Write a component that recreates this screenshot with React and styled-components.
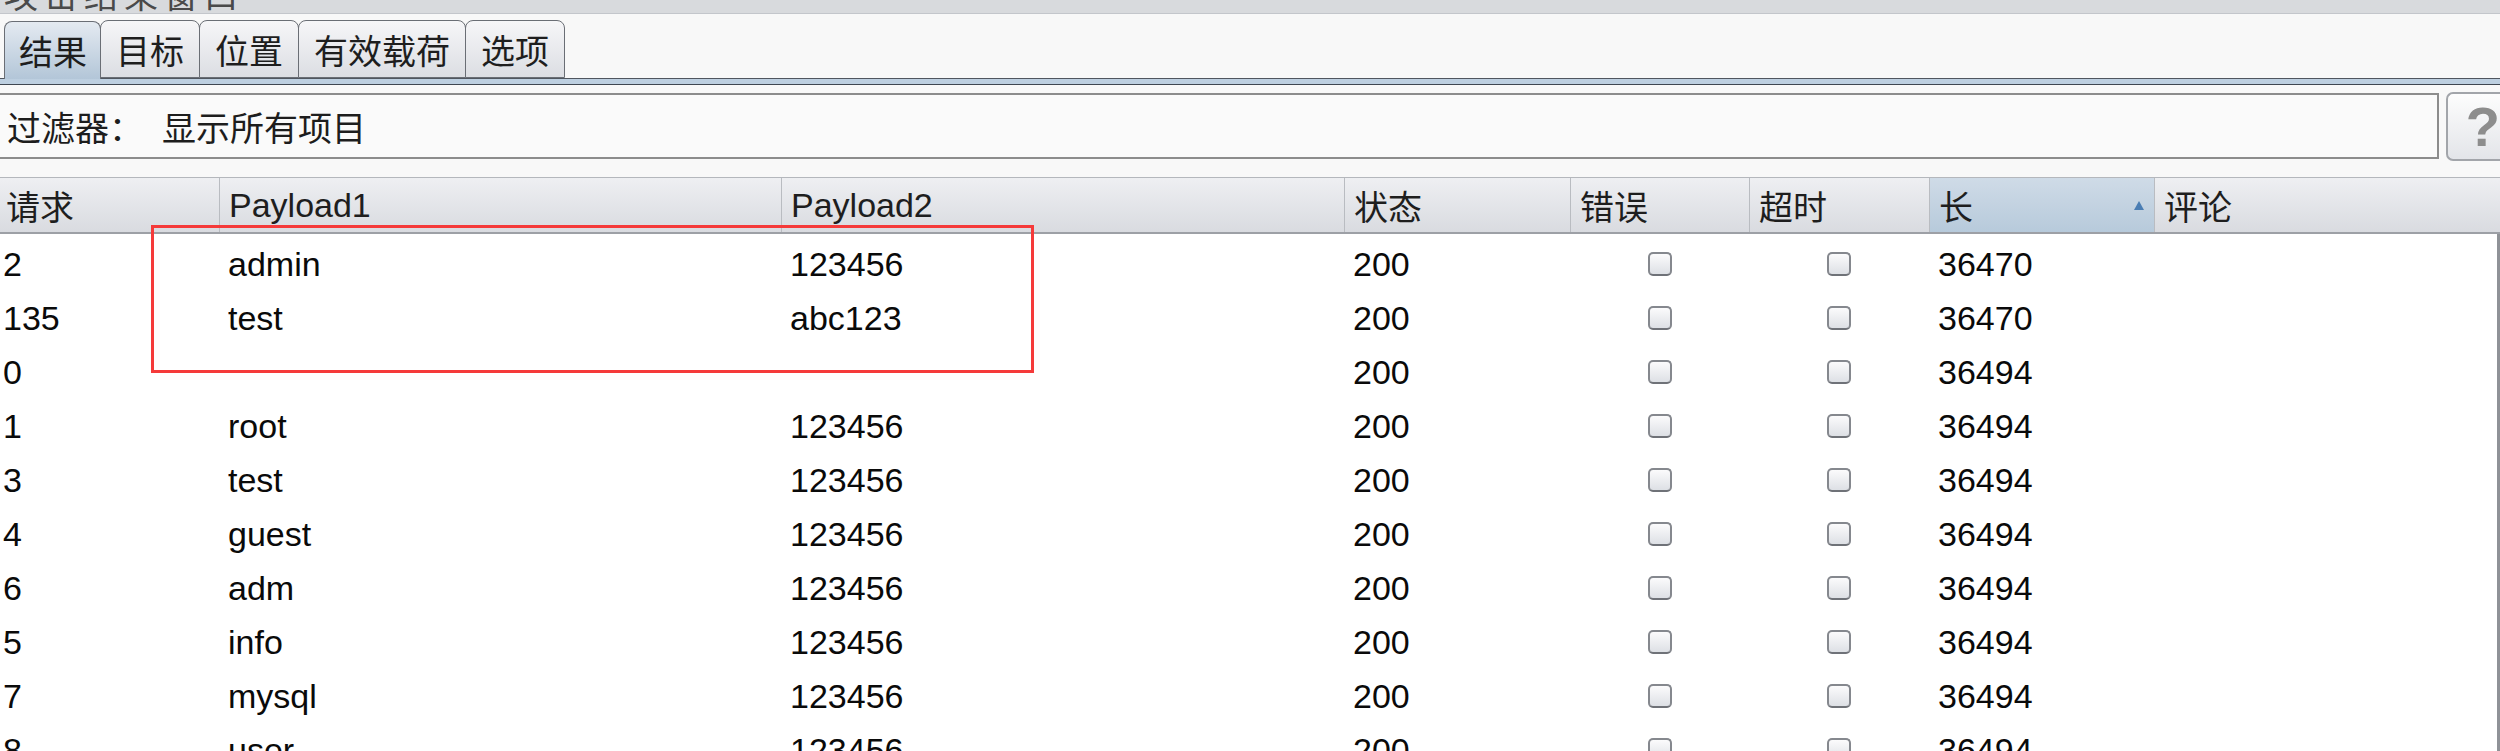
import React from 'react';
import styled, { createGlobalStyle } from 'styled-components';

const GlobalStyle = createGlobalStyle`
  html, body {
    margin: 0;
    padding: 0;
    background: #f8f8f8;
  }
  body {
    font-family: "Liberation Sans", "Noto Sans CJK SC", sans-serif;
  }
`;

const cjk = `"Liberation Sans", "Noto Sans CJK SC", sans-serif`;

const Window = styled.div`
  position: relative;
  width: 2500px;
  height: 751px;
  overflow: hidden;
  background: #f8f8f8;
  display: flex;
  flex-direction: column;
  & > * {
    flex-shrink: 0;
  }
`;

const TitleStrip = styled.div`
  height: 13px;
  overflow: hidden;
  background: #d8dadd;
  border-bottom: 1px solid #c3c6cb;
  padding-left: 4px;
`;

const TitleText = styled.div`
  margin-top: -24px;
  font-family: ${cjk};
  font-size: 34px;
  line-height: 40px;
  color: #4a4a4a;
  letter-spacing: 6px;
`;

const TabBar = styled.div`
  display: flex;
  align-items: flex-end;
  padding: 5px 0 0 4px;
  height: 59px;
  box-sizing: content-box;
`;

const Tab = styled.div`
  position: relative;
  height: 58px;
  box-sizing: border-box;
  padding: ${p => p.$active ? '0 13px 0 14px' : '0 15px 0 15px'};
  margin-right: -1px;
  display: flex;
  align-items: center;
  font-family: ${cjk};
  font-size: 34px;
  color: #1e1e1e;
  border: 1px solid #6a6e75;
  border-radius: 8px 8px 0 0;
  background: ${p => p.$active
    ? 'linear-gradient(#e4eaf1, #b3c6d8)'
    : 'linear-gradient(#f6f6f8, #dcdee3)'};
  border-bottom: ${p => p.$active ? 'none' : '1px solid #6a6e75'};
  margin-bottom: ${p => p.$active ? '-1px' : '0'};
  z-index: ${p => p.$active ? 2 : 1};
`;

const TabBand = styled.div`
  height: 5px;
  background: #bdcfe0;
  border-top: 1px solid #50565f;
  border-bottom: 1px solid #3f4650;
`;

const FilterRow = styled.div`
  display: flex;
  align-items: flex-start;
  gap: 7px;
  padding-top: 7px;
  height: 92px;
  box-sizing: border-box;
`;

const FilterBox = styled.div`
  width: 2442px;
  height: 66px;
  margin-top: 1px;
  box-sizing: border-box;
  background: #fafafa;
  border: 2px solid #8c8c8c;
  border-left: none;
  display: flex;
  align-items: center;
  padding-left: 7px;
  font-family: ${cjk};
  font-size: 34px;
  color: #1d1d1d;
  white-space: pre;
`;

const HelpButton = styled.div`
  flex: 1;
  height: 69px;
  box-sizing: border-box;
  border: 2px solid #a2a5aa;
  border-right: none;
  border-radius: 7px 0 0 7px;
  background: linear-gradient(#fdfdfd, #e3e5e9);
  display: flex;
  align-items: center;
  padding-left: 18px;
  font-family: "Liberation Sans", sans-serif;
  font-weight: bold;
  font-size: 56px;
  color: #8d8d8d;
`;

const columns = '219px 562px 563px 226px 179px 180px 225px 1fr';

const HeaderRow = styled.div`
  display: grid;
  grid-template-columns: ${columns};
  height: 57px;
  box-sizing: border-box;
  border-top: 1px solid #b4b7bc;
  border-bottom: 2px solid #9da0a6;
  background: linear-gradient(#eeeff2, #d9dbe0);
`;

const HeaderCell = styled.div`
  display: flex;
  align-items: center;
  justify-content: space-between;
  padding: 0 10px 0 ${p => p.$first ? '6px' : '9px'};
  border-left: ${p => p.$first ? 'none' : '1px solid #b9bcc1'};
  font-family: ${cjk};
  font-size: 34px;
  color: #1e1e1e;
  background: ${p => p.$sorted ? 'linear-gradient(#cfdbe7, #b7cadb)' : 'transparent'};
`;

const SortArrow = styled.span`
  width: 0;
  height: 0;
  border-left: 5px solid transparent;
  border-right: 5px solid transparent;
  border-bottom: 9px solid #4a7db3;
`;

const Body = styled.div`
  flex: 1 1 auto;
  min-height: 0;
  overflow: hidden;
  background: #ffffff;
  border-right: 3px solid #8f9297;
`;

const Row = styled.div`
  display: grid;
  grid-template-columns: ${columns};
  height: 54px;
  box-sizing: border-box;
  padding-top: 6px;
`;

const Cell = styled.div`
  display: flex;
  align-items: center;
  justify-content: ${p => p.$center ? 'center' : 'flex-start'};
  padding-left: ${p => p.$center ? '0' : p.$first ? '3px' : '9px'};
  font-family: "Liberation Sans", sans-serif;
  font-size: 34px;
  color: #0a0a0a;
  white-space: nowrap;
`;

const Check = styled.span`
  width: 24px;
  height: 24px;
  box-sizing: border-box;
  border: 2px solid #85888e;
  border-bottom-color: #6f7278;
  border-radius: 5px;
  background: linear-gradient(#fbfbfc, #dde0e5);
`;

const Highlight = styled.div`
  position: absolute;
  left: 151px;
  top: 225px;
  width: 883px;
  height: 148px;
  box-sizing: border-box;
  border: 3px solid #f53a3a;
  pointer-events: none;
`;

const tabs = ['结果', '目标', '位置', '有效载荷', '选项'];

const headers = ['请求', 'Payload1', 'Payload2', '状态', '错误', '超时', '长', '评论'];

const rows = [
  ['2', 'admin', '123456', '200', '36470'],
  ['135', 'test', 'abc123', '200', '36470'],
  ['0', '', '', '200', '36494'],
  ['1', 'root', '123456', '200', '36494'],
  ['3', 'test', '123456', '200', '36494'],
  ['4', 'guest', '123456', '200', '36494'],
  ['6', 'adm', '123456', '200', '36494'],
  ['5', 'info', '123456', '200', '36494'],
  ['7', 'mysql', '123456', '200', '36494'],
  ['8', 'user', '123456', '200', '36494'],
];

const App = () => {
  return (
    <Window>
      <GlobalStyle />
      <TitleStrip>
        <TitleText>攻击结果窗口</TitleText>
      </TitleStrip>

      <TabBar>
        {tabs.map((t, i) => (
          <Tab key={t} $active={i === 0}>{t}</Tab>
        ))}
      </TabBar>
      <TabBand />

      <FilterRow>
        <FilterBox>{'过滤器：  显示所有项目'}</FilterBox>
        <HelpButton>?</HelpButton>
      </FilterRow>

      <HeaderRow>
        {headers.map((h, i) => (
          <HeaderCell key={h} $first={i === 0} $sorted={h === '长'}>
            <span>{h}</span>
            {h === '长' && <SortArrow />}
          </HeaderCell>
        ))}
      </HeaderRow>

      <Body>
        {rows.map((r, i) => (
          <Row key={i}>
            <Cell $first>{r[0]}</Cell>
            <Cell>{r[1]}</Cell>
            <Cell>{r[2]}</Cell>
            <Cell>{r[3]}</Cell>
            <Cell $center><Check /></Cell>
            <Cell $center><Check /></Cell>
            <Cell>{r[4]}</Cell>
            <Cell />
          </Row>
        ))}
      </Body>

      <Highlight />
    </Window>
  );
};

export default App;
